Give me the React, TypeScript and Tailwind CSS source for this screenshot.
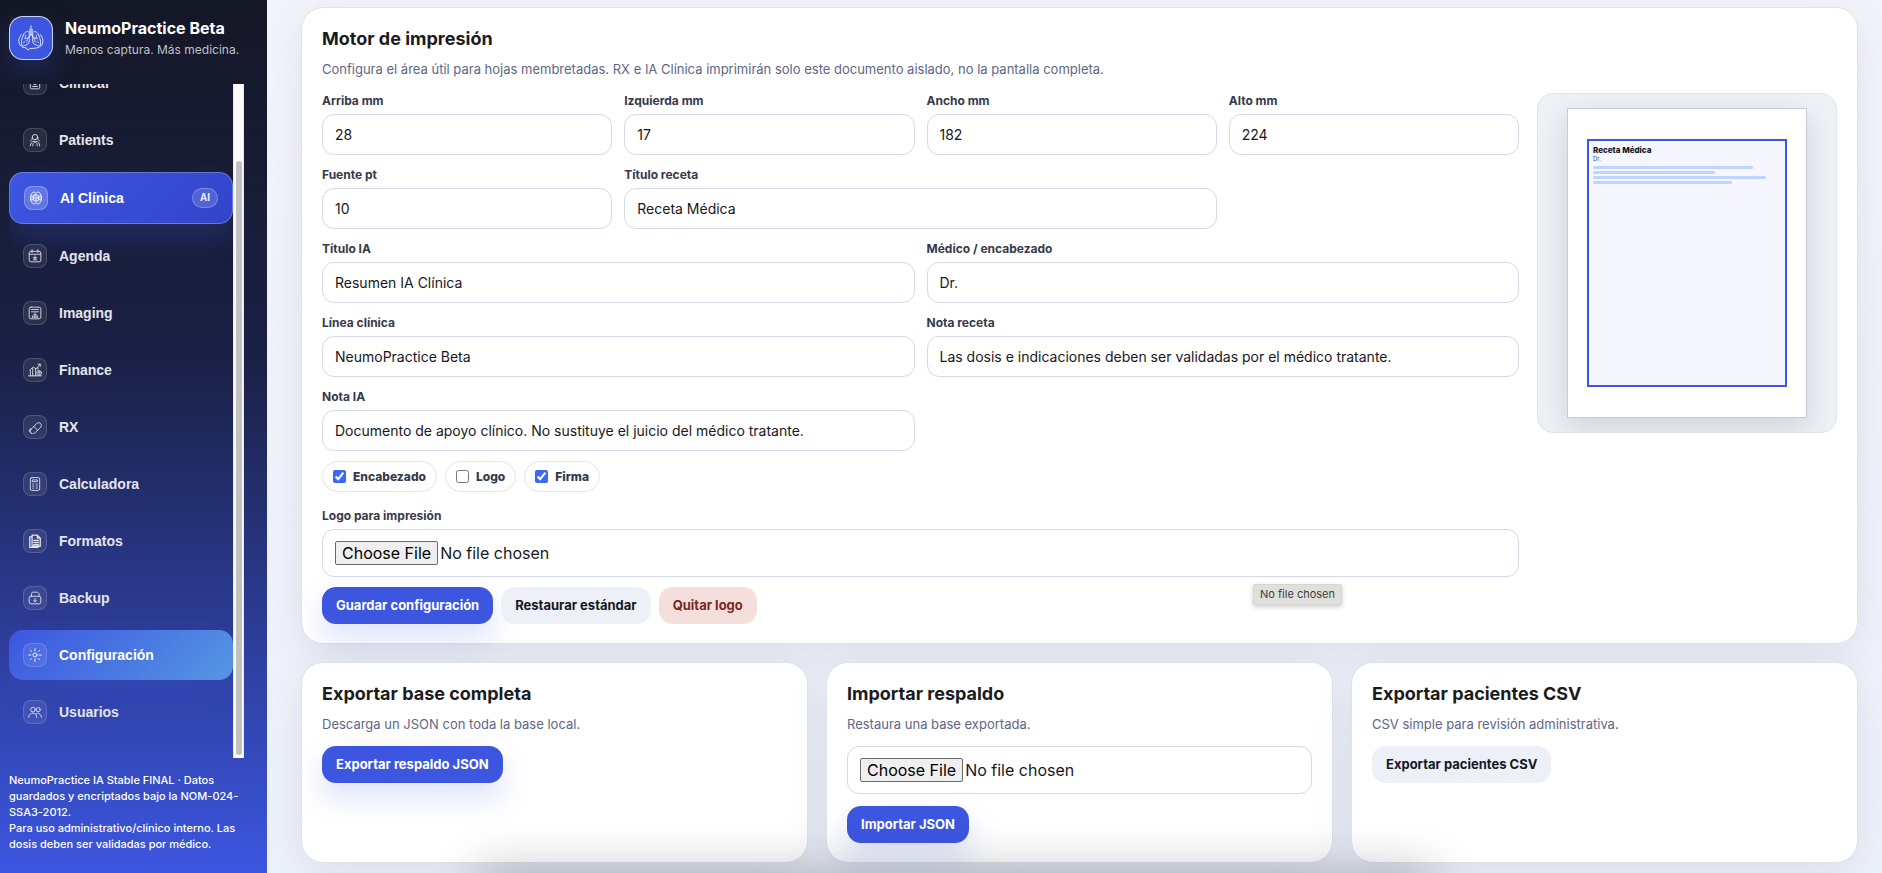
import React from 'react';

const inputClass =
  "w-full h-[41px] rounded-xl border border-[#d5d8e6] bg-white px-3 text-sm text-[#17181c] outline-none";
const fileClass =
  "w-full h-12 rounded-xl border border-[#d5d8e6] bg-white px-3 py-[11px] text-base leading-6 text-[#17181c] file:mr-0.5 file:h-6 file:rounded-xs file:border file:border-solid file:border-[#6b6b6b] file:bg-[#efefef] file:px-1.5 file:text-base file:leading-5 file:font-normal file:text-black";
const labelClass = "block text-xs leading-4 font-bold text-[#343a4a] mb-[5px]";
const cardClass =
  "rounded-[22px] border border-[#e0e2ea] bg-white px-5 py-[19px] shadow-[0_12px_44px_rgba(20,24,36,0.08)]";
const primaryBtn =
  "h-[37px] rounded-[14px] bg-[#3d56e0] px-3.5 text-[13px] font-bold text-white shadow-[0_14px_30px_rgba(61,86,224,0.18)]";
const softBtn = "h-[37px] rounded-[14px] bg-[#edf0f6] px-3.5 text-[13px] font-bold text-[#141827]";

const icons: Record<string, React.ReactNode> = {
  clinical: (
    <>
      <rect x="4" y="2" width="16" height="20" rx="2" />
      <path d="M8 6h8M8 18h8" />
      <circle cx="12" cy="12" r="3" />
      <path d="M12 11v2" />
    </>
  ),
  patients: (
    <>
      <circle cx="12" cy="7" r="4.500" />
      <path d="M7 8v3l-3 3M17 8v3l3 3M4 22c0-5 3-8 8-8s8 3 8 8M8 22l1-4 3-3 3 3 1 4" />
    </>
  ),
  ai: (
    <>
      <rect x="8" y="7" width="8" height="10" rx="1" />
      <path d="M12 3v18M4 12h16M8 9H4M8 15H4M16 9h4M16 15h4" />
      <path d="M10 2C6 1 4 4 5 6c-3 1-3 4-2 6-1 2-1 5 2 6-1 2 2 5 5 4M14 2c4-1 6 2 5 4 3 1 3 4 2 6 1 2 1 5-2 6 1 2-2 5-5 4" />
    </>
  ),
  agenda: (
    <>
      <rect x="2" y="4" width="20" height="18" rx="3" />
      <path d="M2 9h20M7 1v5M17 1v5M12 12v7M9 15h6M9 19c1-1 2-2 3-2s2 1 3 2" />
    </>
  ),
  imaging: (
    <>
      <rect x="2" y="2" width="20" height="20" rx="3" />
      <path d="M6 6h12M6 10h12M12 12v8M8 19c0-3 1-5 3-4M16 19c0-3-1-5-3-4M7 19h10" />
    </>
  ),
  finance: (
    <>
      <path d="M1 22h22M4 22v-9M8 22V9M13 22V9M17 11V8M3 12l6-5 5 3 7-8M17 2h4v4" />
      <circle cx="19" cy="17" r="4" />
      <path d="M19 14v6M17.500 16h3" />
    </>
  ),
  rx: (
    <>
      <path d="m5 16 10-10a4.500 4.500 0 0 1 6.500 6.500l-10 10A4.500 4.500 0 0 1 5 16Z" />
      <path d="m10 11 6.500 6.500M4 15l-2 3 3 4" />
    </>
  ),
  calc: (
    <>
      <rect x="4" y="1" width="16" height="22" rx="2.500" />
      <path d="M8 5h8v3H8zM8 12h2M14 12h2M8 15.500h2M14 15.500h2M8 19h2M14 19h2" />
    </>
  ),
  formatos: (
    <>
      <path d="M7 2h9l5 5v14H7zM16 2v5h5M7 5H3v18h14M10 11h8M10 14.500h8M10 18h8" strokeWidth="2.200" />
    </>
  ),
  backup: (
    <>
      <rect x="2" y="9" width="20" height="13" rx="3" />
      <path d="M6 9V5c0-2 1-3 3-3h6c2 0 3 1 4 3v4M12 12.500v6M9.500 16l2.500 2.500 2.500-2.500" />
    </>
  ),
  config: (
    <>
      <circle cx="12" cy="12" r="3.500" />
      <path d="M12 1v4M12 19v4M1 12h4M19 12h4M4 4l2 2M18 18l2 2M4 20l2-2M18 6l2-2" />
    </>
  ),
  users: (
    <>
      <circle cx="8.500" cy="8" r="4" />
      <circle cx="17.500" cy="8" r="3.500" />
      <path d="M1 21c1-5 4-7 7.500-7s6 2 6.500 7M13 16c5-4 9-1 10 5" />
    </>
  ),
};

const navItems = [
  { name: "Clinical", icon: "clinical" },
  { name: "Patients", icon: "patients" },
  { name: "AI Clínica", icon: "ai", badge: "AI" },
  { name: "Agenda", icon: "agenda" },
  { name: "Imaging", icon: "imaging" },
  { name: "Finance", icon: "finance" },
  { name: "RX", icon: "rx" },
  { name: "Calculadora", icon: "calc" },
  { name: "Formatos", icon: "formatos" },
  { name: "Backup", icon: "backup" },
  { name: "Configuración", icon: "config", active: true },
  { name: "Usuarios", icon: "users" },
];

const fields = [
  { id: "top", label: "Arriba mm", value: "28", span: "col-span-1" },
  { id: "left", label: "Izquierda mm", value: "17", span: "col-span-1" },
  { id: "width", label: "Ancho mm", value: "182", span: "col-span-1" },
  { id: "height", label: "Alto mm", value: "224", span: "col-span-1" },
  { id: "font", label: "Fuente pt", value: "10", span: "col-span-1" },
  { id: "rxTitle", label: "Título receta", value: "Receta Médica", span: "col-span-2" },
  { id: "iaTitle", label: "Título IA", value: "Resumen IA Clínica", span: "col-span-2 col-start-1" },
  { id: "doctor", label: "Médico / encabezado", value: "Dr.", span: "col-span-2" },
  { id: "clinic", label: "Línea clínica", value: "NeumoPractice Beta", span: "col-span-2" },
  { id: "rxNote", label: "Nota receta", value: "Las dosis e indicaciones deben ser validadas por el médico tratante.", span: "col-span-2" },
  { id: "iaNote", label: "Nota IA", value: "Documento de apoyo clínico. No sustituye el juicio del médico tratante.", span: "col-span-2" },
];

const toggles = [
  { name: "Encabezado", checked: true },
  { name: "Logo", checked: false },
  { name: "Firma", checked: true },
];

function LungsLogo() {
  return (
    <svg viewBox="0 0 48 48" className="w-7 h-7" fill="none" stroke="white" strokeWidth="1.400" strokeLinecap="round" strokeLinejoin="round">
      <path d="M24 3v15M22 9v8M26 9v8M24 18l-5 6M24 18l5 6" />
      <path d="M20 14c-3-3-7 0-9 5-3 6-4 12-3 17 1 3 5 1 7 0 4-1 6-3 6-7V17" />
      <path d="M28 14c3-3 7 0 9 5 3 6 4 12 3 17-1 3-5 1-7 0-4-1-6-3-6-7V17" />
      <path d="M18 24l-5 1M18 24l-1 7M14 30l-3 2M15 19l-1 5M30 24l5 1M30 24l1 7M34 30l3 2M33 19l1 5" strokeWidth="1.100" />
      <path d="M8 18c-7 6-7 17 2 22l6 1 3 4 3-3c9 0 16-1 20-5 4-6 3-13-2-19" />
    </svg>
  );
}

function Sidebar() {
  return (
    <aside className="w-[267px] shrink-0 h-screen flex flex-col overflow-hidden bg-[linear-gradient(180deg,#141725_0%,#1b2147_42%,#3c56e0_100%)] pl-[9px] pr-[23px] pb-[21px]">
      <div className="flex items-center gap-3 pt-4 h-[60px] shrink-0 mb-6">
        <div className="w-11 h-11 shrink-0 rounded-[14px] border border-white/75 bg-[#3d56e0] flex items-center justify-center shadow-[0_12px_28px_rgba(61,86,224,0.25)]">
          <LungsLogo />
        </div>
        <div className="whitespace-nowrap">
          <div className="text-base leading-6 font-bold text-white">NeumoPractice Beta</div>
          <div className="text-xs leading-5 text-[#bfc1c9]">Menos captura. Más medicina.</div>
        </div>
      </div>

      <div className="flex-1 min-h-0 flex overflow-hidden">
        <nav className="flex-1 min-h-0 flex flex-col justify-end gap-[7px] pb-[21px] overflow-hidden font-['Liberation_Sans',Arial,sans-serif]">
          {navItems.map((item) => (
            <a
              key={item.name}
              href="#"
              className={`shrink-0 flex items-center gap-3 rounded-[14px] text-sm font-bold ${
                item.badge
                  ? 'h-[52px] px-3.5 border border-white/25 bg-[linear-gradient(135deg,#3d56e0,#3344cb)] text-white shadow-[0_14px_30px_rgba(61,86,224,0.25)]'
                  : item.active
                  ? 'h-[50px] px-3.5 bg-[linear-gradient(135deg,#3d56e0,#5596e3)] text-white shadow-[0_12px_28px_rgba(61,86,224,0.2)]'
                  : 'h-[50px] px-3.5 text-[#e4e5ea]'
              }`}
            >
              <span className={`w-6 h-6 rounded-lg border flex items-center justify-center ${item.badge ? 'bg-white/20 border-white/25' : 'bg-white/8 border-white/15'}`}>
                <svg viewBox="0 0 24 24" className="w-3.5 h-3.5" fill="none" stroke="currentColor" strokeWidth="1.500" strokeLinecap="round" strokeLinejoin="round">
                  {icons[item.icon]}
                </svg>
              </span>
              <span>{item.name}</span>
              {item.badge && (
                <span className="ml-auto w-[26px] h-5 rounded-full border border-white/25 bg-white/15 flex items-center justify-center text-[10px] font-bold text-white/90">
                  {item.badge}
                </span>
              )}
            </a>
          ))}
        </nav>
        {/* scrollbar */}
        <div className="w-[11px] shrink-0 bg-[#fafafa] border-x border-[#e8e8e8] flex flex-col items-center pt-[77px] pb-[3px]">
          <div className="w-1.5 flex-1 rounded-full bg-[#c1c1c1]"></div>
        </div>
      </div>

      <p className="shrink-0 pt-3.5 text-[11px] leading-4 font-medium text-white">
        NeumoPractice IA Stable FINAL · Datos guardados y encriptados bajo la NOM-024-SSA3-2012.
        <br />
        Para uso administrativo/clínico interno. Las dosis deben ser validadas por médico.
      </p>
    </aside>
  );
}

function CardHead({ title, text }: { title: string; text: string }) {
  return (
    <>
      <h2 className="text-lg leading-6 font-bold text-[#1a1b1e]">{title}</h2>
      <p className="mt-2 mb-3 text-[13px] leading-5 text-[#5d6785]">{text}</p>
    </>
  );
}

function PrintPreview() {
  return (
    <div className="w-[300px] shrink-0 self-start rounded-2xl border border-[#dfe2ea] bg-[#eef2f7] py-3.5 flex justify-center overflow-hidden">
      <div className="w-60 h-[310px] border border-[#c5cdd8] bg-white px-[19px] pt-[30px] shadow-[0_10px_30px_rgba(15,23,42,0.14)]">
        <div className="h-[248px] border-2 border-[#3d56e0] bg-[#f5f6ff] p-1">
          <div className="text-[8px] leading-[10px] font-extrabold text-[#111322]">Receta Médica</div>
          <div className="text-[6px] leading-2 text-[#4a5590]">Dr.</div>
          <div className="mt-[3px] flex flex-col gap-0.5">
            <div className="h-[3px] w-[85%] rounded-full bg-[#bfd4fe]"></div>
            <div className="h-[3px] w-[65%] rounded-full bg-[#bfd4fe]"></div>
            <div className="h-[3px] w-[92%] rounded-full bg-[#bfd4fe]"></div>
            <div className="h-[3px] w-[74%] rounded-full bg-[#bfd4fe]"></div>
          </div>
        </div>
      </div>
    </div>
  );
}

export default function App() {
  return (
    <div className="h-screen flex overflow-hidden font-['Inter',sans-serif] antialiased">
      <Sidebar />

      <main className="relative flex-1 min-w-0 overflow-hidden bg-linear-to-b from-[#f3f4fb] to-[#edf1fa] pl-[34px] pr-6 pt-[7px]">
        {/* MOTOR DE IMPRESION */}
        <section className={cardClass}>
          <CardHead
            title="Motor de impresión"
            text="Configura el área útil para hojas membretadas. RX e IA Clínica imprimirán solo este documento aislado, no la pantalla completa."
          />
          <div className="pt-0.5 flex gap-[18px]">
            <div className="flex-1 min-w-0">
              <div className="grid grid-cols-4 gap-3">
                {fields.map((f) => (
                  <div key={f.id} className={f.span}>
                    <label htmlFor={f.id} className={labelClass}>{f.label}</label>
                    <input id={f.id} type="text" defaultValue={f.value} className={inputClass} />
                  </div>
                ))}
              </div>

              <div className="mt-2.5 flex gap-2">
                {toggles.map((t) => (
                  <label key={t.name} className="h-[31px] rounded-full border border-[#e3e5ea] px-2.5 flex items-center gap-[7px] text-xs font-extrabold text-[#343a4a]">
                    <input type="checkbox" defaultChecked={t.checked} className="w-[13px] h-[13px] accent-[#3d67fb]" />
                    {t.name}
                  </label>
                ))}
              </div>

              <div className="relative mt-4">
                <label htmlFor="logo" className={labelClass}>Logo para impresión</label>
                <input id="logo" type="file" className={fileClass} />
                <div className="absolute right-[177px] top-full mt-[7px] h-[21px] border border-[#d6d7d3] bg-[#dfe0dc] rounded-xs px-1.5 text-[11px] leading-[19px] text-[#3c3d3c] shadow-[0_2px_5px_rgba(0,0,0,0.2)]">
                  No file chosen
                </div>
              </div>

              <div className="mt-2.5 flex gap-2">
                <button type="button" className={primaryBtn}>Guardar configuración</button>
                <button type="button" className={softBtn}>Restaurar estándar</button>
                <button type="button" className="h-[37px] rounded-[14px] bg-[#f5dfdd] px-3.5 text-[13px] font-bold text-[#7c271f]">Quitar logo</button>
              </div>
            </div>

            <PrintPreview />
          </div>
        </section>

        {/* RESPALDOS */}
        <div className="mt-[18px] grid grid-cols-3 gap-[18px]">
          <section className={cardClass}>
            <CardHead title="Exportar base completa" text="Descarga un JSON con toda la base local." />
            <button type="button" className={primaryBtn}>Exportar respaldo JSON</button>
          </section>
          <section className={cardClass}>
            <CardHead title="Importar respaldo" text="Restaura una base exportada." />
            <input type="file" aria-label="Importar respaldo" className={fileClass} />
            <button type="button" className={`mt-3 block ${primaryBtn}`}>Importar JSON</button>
          </section>
          <section className={cardClass}>
            <CardHead title="Exportar pacientes CSV" text="CSV simple para revisión administrativa." />
            <button type="button" className={softBtn}>Exportar pacientes CSV</button>
          </section>
        </div>

        {/* dock hidden under the bottom edge, only its shadow shows */}
        <div className="absolute top-full left-[210px] right-[450px] h-16 rounded-2xl shadow-[0_0_50px_rgba(20,24,36,0.32)]"></div>
      </main>
    </div>
  );
}
